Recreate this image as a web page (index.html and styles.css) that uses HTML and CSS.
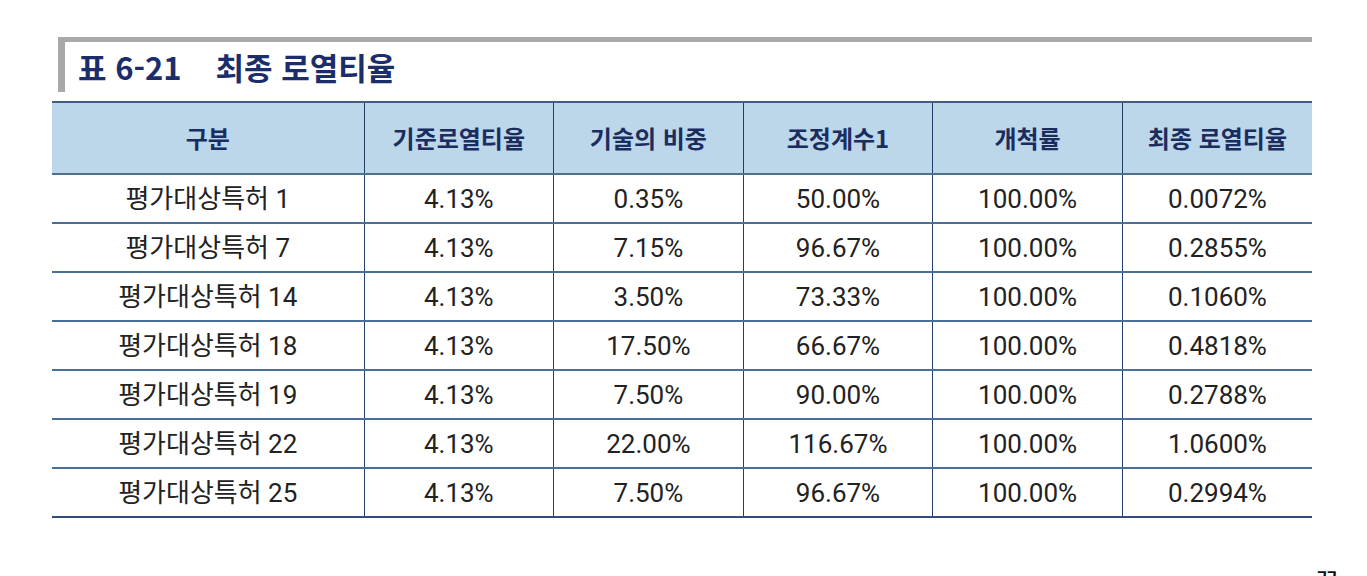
FILE: index.html
```html
<!DOCTYPE html>
<html lang="ko">
<head>
<meta charset="utf-8">
<title>표 6-21 최종 로열티율</title>
<link rel="stylesheet" href="styles.css">
</head>
<body>
<div class="page">
  <div class="caption">
    <span class="cap-num">표 6-21</span><span class="cap-title">최종 로열티율</span>
  </div>
  <table class="royalty">
    <colgroup>
      <col class="c-first"><col class="c"><col class="c"><col class="c"><col class="c"><col class="c">
    </colgroup>
    <thead>
      <tr><th>구분</th><th>기준로열티율</th><th>기술의 비중</th><th>조정계수1</th><th>개척률</th><th>최종 로열티율</th></tr>
    </thead>
    <tbody>
      <tr><td>평가대상특허 1</td><td>4.13%</td><td>0.35%</td><td>50.00%</td><td>100.00%</td><td>0.0072%</td></tr>
      <tr><td>평가대상특허 7</td><td>4.13%</td><td>7.15%</td><td>96.67%</td><td>100.00%</td><td>0.2855%</td></tr>
      <tr><td>평가대상특허 14</td><td>4.13%</td><td>3.50%</td><td>73.33%</td><td>100.00%</td><td>0.1060%</td></tr>
      <tr><td>평가대상특허 18</td><td>4.13%</td><td>17.50%</td><td>66.67%</td><td>100.00%</td><td>0.4818%</td></tr>
      <tr><td>평가대상특허 19</td><td>4.13%</td><td>7.50%</td><td>90.00%</td><td>100.00%</td><td>0.2788%</td></tr>
      <tr><td>평가대상특허 22</td><td>4.13%</td><td>22.00%</td><td>116.67%</td><td>100.00%</td><td>1.0600%</td></tr>
      <tr><td>평가대상특허 25</td><td>4.13%</td><td>7.50%</td><td>96.67%</td><td>100.00%</td><td>0.2994%</td></tr>
    </tbody>
  </table>
  <div class="end"><span>끝</span></div>
</div>
</body>
</html>
```

FILE: styles.css
```css
html, body {
  margin: 0;
  padding: 0;
  background: #ffffff;
  overflow: hidden;
}
.page {
  padding: 37px 0 0 52px;
  width: 1260px;
  font-family: "Roboto", "Noto Sans CJK KR", sans-serif;
  color: #222222;
}
.caption {
  margin-left: 6px;
  height: 50px;
  border-top: 5px solid #a9a9a9;
  border-left: 7px solid #a9a9a9;
  display: flex;
  align-items: center;
  padding-left: 13px;
  font-family: "Noto Sans CJK KR", sans-serif;
  font-weight: 700;
  font-size: 31px;
  line-height: 40px;
  color: #1b2d6b;
}
.cap-num {
  margin-right: 34px;
}
.royalty {
  margin-top: 9px;
  width: 1260px;
  border-collapse: collapse;
  table-layout: fixed;
}
.c-first { width: 312px; }
.c { width: 189.6px; }
.royalty th {
  background: #bcd6ea;
  height: 70px;
  padding: 0;
  font-family: "Noto Sans CJK KR", sans-serif;
  font-weight: 700;
  font-size: 24px;
  line-height: 30px;
  color: #1b2d5e;
  border-top: 2px solid #3e5f82;
  border-bottom: 2px solid #4e6f8d;
  border-left: 1.5px solid #1f3f6a;
  text-align: center;
}
.royalty td {
  height: 47px;
  padding: 0;
  font-size: 26px;
  line-height: 30px;
  font-weight: 400;
  color: #222222;
  text-align: center;
  border-bottom: 2px solid #4a6f96;
  border-left: 1.5px solid #1f3f6a;
}
.royalty th:first-child,
.royalty td:first-child {
  border-left: none;
}
.royalty tbody tr:last-child td {
  border-bottom: 2px solid #2f4f7a;
}
.end {
  margin-top: 50px;
  text-align: right;
  font-family: "Noto Sans CJK KR", sans-serif;
  font-size: 28px;
  line-height: 1;
  color: #111;
  margin-right: -28px;
}
```
